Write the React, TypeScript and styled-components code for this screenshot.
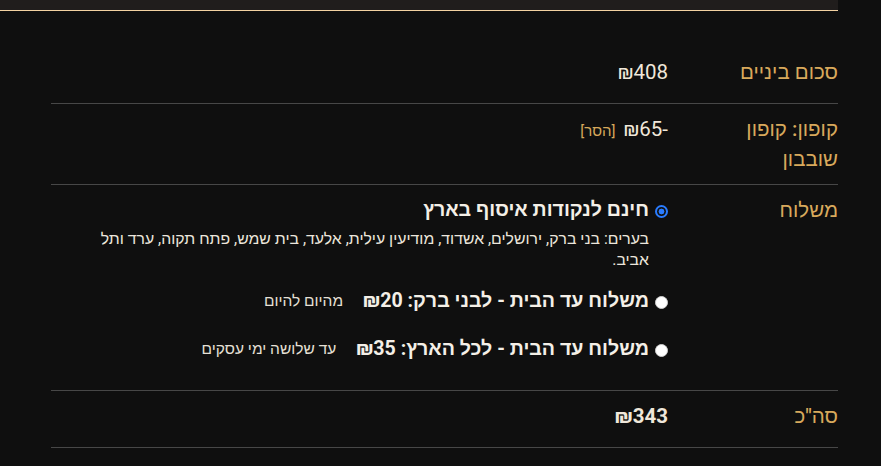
import React from "react";
import styled, { createGlobalStyle } from "styled-components";

const GlobalStyle = createGlobalStyle`
  body {
    margin: 0;
    background: #0f0f0f;
    font-family: Roboto, "Liberation Sans", sans-serif;
  }
`;

type ShippingOption = {
  id: string;
  label: string;
  amount?: string;
  note?: string;
  desc?: string;
  checked?: boolean;
};

const options: ShippingOption[] = [
  {
    id: "pickup",
    label: "חינם לנקודות איסוף בארץ",
    desc: "בערים: בני ברק, ירושלים, אשדוד, מודיעין עילית, אלעד, בית שמש, פתח תקוה, ערד ותל אביב.",
    checked: true,
  },
  {
    id: "bnei-brak",
    label: "משלוח עד הבית - לבני ברק:",
    amount: "₪20",
    note: "מהיום להיום",
  },
  {
    id: "country",
    label: "משלוח עד הבית - לכל הארץ:",
    amount: "₪35",
    note: "עד שלושה ימי עסקים",
  },
];

const App: React.FC = () => {
  return (
    <>
      <GlobalStyle />
      <Wrapper>
        <TopBar />
        <Totals dir="rtl">
          <tbody>
            <Row>
              <Label $loose>סכום ביניים</Label>
              <Value $loose>
                <Amount>₪408</Amount>
              </Value>
            </Row>
            <Row>
              <Label>קופון: קופון שובבון</Label>
              <Value>
                <Amount>₪65-</Amount>
                <RemoveLink href="#">[הסר]</RemoveLink>
              </Value>
            </Row>
            <Row>
              <Label>משלוח</Label>
              <Value>
                <Methods>
                  {options.map((o) => (
                    <Method key={o.id}>
                      <Radio type="radio" name="shipping" defaultChecked={o.checked} />
                      <MethodBody>
                        <MethodLine>
                          <MethodLabel>
                            {o.label}
                            {o.amount && (
                              <>
                                {" "}
                                <Amount>{o.amount}</Amount>
                              </>
                            )}
                          </MethodLabel>
                          {o.note && <Note>{o.note}</Note>}
                        </MethodLine>
                        {o.desc && <Desc>{o.desc}</Desc>}
                      </MethodBody>
                    </Method>
                  ))}
                </Methods>
              </Value>
            </Row>
            <Row>
              <Label $loose>סה"כ</Label>
              <Value $loose>
                <Total>₪343</Total>
              </Value>
            </Row>
          </tbody>
        </Totals>
      </Wrapper>
    </>
  );
};

export default App;

const Wrapper = styled.div`
  width: 838px;
`;

const TopBar = styled.div`
  height: 10px;
  background: #201d1c;
  border-bottom: 1px solid #f3d2a2;
`;

const Totals = styled.table`
  margin: 36px 0 0 51px;
  width: 787px;
  border-collapse: collapse;
  table-layout: fixed;
`;

const Row = styled.tr`
  border-bottom: 1px solid #474747;
`;

const Label = styled.th<{ $loose?: boolean }>`
  width: 130px;
  padding: 10px 0 ${(p) => (p.$loose ? "16px" : "10px")} 40px;
  text-align: right;
  vertical-align: top;
  color: #d8a95c;
  font-size: 20.5px;
  font-weight: 500;
  line-height: 30px;
`;

const Value = styled.td<{ $loose?: boolean }>`
  padding: 10px 0 ${(p) => (p.$loose ? "16px" : "10px")} 36px;
  text-align: right;
  vertical-align: top;
  color: #efe7da;
  font-size: 20.5px;
  line-height: 30px;
`;

const Amount = styled.bdi`
  direction: ltr;
  unicode-bidi: isolate;
`;

const Total = styled(Amount)`
  font-weight: 700;
`;

const RemoveLink = styled.a`
  margin-right: 8px;
  color: #d6a85b;
  font-size: 15px;
  text-decoration: none;
`;

const Methods = styled.ul`
  list-style: none;
  margin: 0 0 16px;
  padding: 0;
  display: flex;
  flex-direction: column;
  gap: 18px;
`;

const Method = styled.li`
  display: flex;
  align-items: flex-start;
  gap: 6px;
`;

const Radio = styled.input`
  appearance: none;
  flex: none;
  width: 13px;
  height: 13px;
  margin: 10px 0 0;
  border-radius: 50%;
  background: #fff;
  border: 1px solid #d0d0d0;

  &:checked {
    border: 2px solid #2a7cff;
    background: radial-gradient(circle, #2a7cff 0 2.6px, #111 3.2px);
  }
`;

const MethodBody = styled.div`
  display: flex;
  flex-direction: column;
`;

const MethodLine = styled.div`
  display: flex;
  align-items: center;
  gap: 20px;
`;

const MethodLabel = styled.span`
  font-weight: 700;
  font-size: 19.6px;
  color: #f4efe7;
`;

const Note = styled.span`
  font-size: 15.5px;
  color: #e6e0d6;
`;

const Desc = styled.p`
  margin: 3px 0 -2px;
  font-size: 15.8px;
  line-height: 21px;
  color: #ece6dc;
`;
